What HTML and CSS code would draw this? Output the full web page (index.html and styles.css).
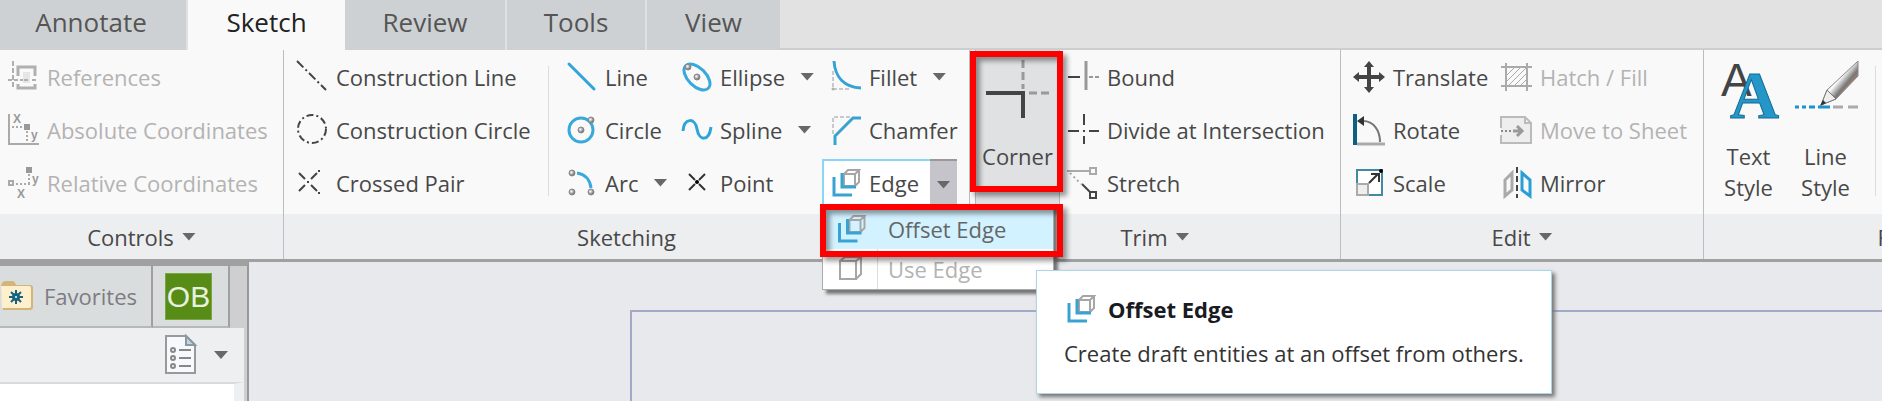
FILE: index.html
```html
<!DOCTYPE html>
<html lang="en">
<head>
    <meta charset="UTF-8">
    <meta name="viewport" content="width=device-width, initial-scale=1.0">
    <title>Sketch</title>
    <link rel="stylesheet" href="styles.css">
</head>
<body>
    <svg class="defs" aria-hidden="true">
        <symbol id="cube" viewBox="0 0 32 32">
            <path d="M6 8h16v18H6zM6 8l5-4h16l-5 4M27 4v17l-5 5" fill="none" stroke="#a6a6a6" stroke-width="2"/>
        </symbol>
        <symbol id="offset-edge" viewBox="0 0 32 32">
            <path d="M15 7h11v12H15zM15 7l4-4h11l-4 4M30 3v12l-4 4" fill="none" stroke="#a6a6a6" stroke-width="2"/>
            <path d="M13 6v14h14M5 10v18h18" fill="none" stroke="#38a3d3" stroke-width="3"/>
        </symbol>
        <radialGradient id="ball" cx="0.4" cy="0.4">
            <stop offset="0" stop-color="#fff"/>
            <stop offset="1" stop-color="#777"/>
        </radialGradient>
        <linearGradient id="pencil" x1="0" y1="0" x2="1" y2="1">
            <stop offset="0.3" stop-color="#999"/>
            <stop offset="0.45" stop-color="#fff"/>
            <stop offset="0.6" stop-color="#777"/>
            <stop offset="0.7" stop-color="#b98468"/>
        </linearGradient>
    </svg>

    <nav class="tabs">
        <button class="tab annotate">Annotate</button>
        <button class="tab sketch active">Sketch</button>
        <button class="tab review">Review</button>
        <button class="tab tools">Tools</button>
        <button class="tab view">View</button>
    </nav>

    <div class="ribbon">
        <section class="group controls">
            <div class="group-body">
                <div class="col">
                    <button class="cmd" disabled>
                        <svg class="icon" viewBox="0 0 32 32" fill="none" stroke="#b0b0b0" stroke-width="2">
                            <path d="M6 0v28" stroke-dasharray="5 2"/>
                            <path d="M1 19h30" stroke-dasharray="4 2"/>
                            <path d="M11 15V6h17v9M11 23v4h17v-4" stroke-width="3"/>
                            <path d="M16 11h7v11h-7z" fill="#e6e6e6" stroke="none"/>
                            <path d="M17 19h4"/>
                        </svg>
                        References
                    </button>
                    <button class="cmd" disabled>
                        <svg class="icon" viewBox="0 0 32 32" fill="none" stroke="#aaa" stroke-width="2">
                            <path d="M2 0v30h30"/>
                            <path d="M5 13h12M20 17v11" stroke-dasharray="2 2"/>
                            <path d="M17 10h6v6h-6z" fill="#999" stroke="none"/>
                            <text class="axis" x="6" y="9">X</text>
                            <text class="axis" x="24" y="25">y</text>
                        </svg>
                        Absolute Coordinates
                    </button>
                    <button class="cmd" disabled>
                        <svg class="icon" viewBox="0 0 32 32" fill="none" stroke="#aaa" stroke-width="2">
                            <path d="M2 14h4v4H2z"/>
                            <path d="M9 17h14M22 7v9" stroke-dasharray="2 2"/>
                            <path d="M19 0h6v6h-6z" fill="#999" stroke="none"/>
                            <text class="axis" x="10" y="31">X</text>
                            <text class="axis" x="25" y="16">y</text>
                        </svg>
                        Relative Coordinates
                    </button>
                </div>
            </div>
            <button class="group-label">Controls <span class="arrow"></span></button>
        </section>

        <section class="group sketching">
            <div class="group-body">
                <div class="col construction">
                    <button class="cmd">
                        <svg class="icon" viewBox="0 0 32 32" fill="none" stroke="#444" stroke-width="2">
                            <path d="M1 0l29 29" stroke-dasharray="9 3 2 3"/>
                        </svg>
                        Construction Line
                    </button>
                    <button class="cmd">
                        <svg class="icon" viewBox="0 0 32 32" fill="none" stroke="#444" stroke-width="2">
                            <circle cx="16" cy="15" r="14" stroke-dasharray="7 3 2 3"/>
                        </svg>
                        Construction Circle
                    </button>
                    <button class="cmd">
                        <svg class="icon" viewBox="0 0 32 32" fill="none" stroke="#444" stroke-width="2">
                            <path d="M3 6l6 6M15 18l6 6M3 24l6-6M15 12l6-6M11 15h2M23 3v2M23 25v2"/>
                        </svg>
                        Crossed Pair
                    </button>
                </div>
                <div class="col shapes">
                    <button class="cmd">
                        <svg class="icon" viewBox="0 0 32 32" fill="none" stroke="#2fa4d8" stroke-width="3">
                            <path d="M4 3l25 25" stroke-linecap="round"/>
                        </svg>
                        Line
                    </button>
                    <button class="cmd">
                        <svg class="icon" viewBox="0 0 32 32" fill="none" stroke="#38a9dc" stroke-width="3">
                            <circle cx="16" cy="16" r="12"/>
                            <g fill="url(#ball)" stroke="#888" stroke-width="1">
                                <circle cx="16" cy="16" r="3"/>
                                <circle cx="26" cy="6" r="3"/>
                            </g>
                        </svg>
                        Circle
                    </button>
                    <button class="cmd">
                        <svg class="icon" viewBox="0 0 32 32" fill="none" stroke="#38a9dc" stroke-width="3">
                            <path d="M12 6c8 1 13 7 14 15"/>
                            <g fill="url(#ball)" stroke="#888" stroke-width="1">
                                <circle cx="7" cy="6" r="3"/>
                                <circle cx="7" cy="25" r="3"/>
                                <circle cx="26" cy="25" r="3"/>
                            </g>
                        </svg>
                        Arc <span class="arrow"></span>
                    </button>
                </div>
                <div class="col curves">
                    <button class="cmd">
                        <svg class="icon" viewBox="0 0 32 32" fill="none" stroke="#38a9dc" stroke-width="3">
                            <ellipse cx="17" cy="16" rx="16" ry="9" transform="rotate(45 17 16)"/>
                            <g fill="url(#ball)" stroke="#888" stroke-width="1">
                                <circle cx="8" cy="6" r="3"/>
                                <circle cx="17" cy="16" r="3"/>
                            </g>
                        </svg>
                        Ellipse <span class="arrow"></span>
                    </button>
                    <button class="cmd">
                        <svg class="icon" viewBox="0 0 32 32" fill="none" stroke="#2fa4d8" stroke-width="3">
                            <path d="M3 17C4 4 15 3 17 15S29 28 31 13"/>
                        </svg>
                        Spline <span class="arrow"></span>
                    </button>
                    <button class="cmd">
                        <svg class="icon" viewBox="0 0 32 32" fill="none" stroke="#333" stroke-width="2">
                            <path d="M9 7l6 6M19 17l6 6M9 23l6-6M19 13l6-6"/>
                            <circle cx="17" cy="15" r="2" fill="#000" stroke="none"/>
                        </svg>
                        Point
                    </button>
                </div>
                <div class="col edges">
                    <button class="cmd">
                        <svg class="icon" viewBox="0 0 32 32" fill="none" stroke="#38a3d3" stroke-width="3">
                            <path d="M4 10v18h16" stroke="#999" stroke-width="1" stroke-dasharray="4 2"/>
                            <path d="M5 0c1 16 10 26 27 27"/>
                            <circle cx="4" cy="28" r="1" stroke="#999" stroke-width="1" fill="#fff"/>
                        </svg>
                        Fillet <span class="arrow"></span>
                    </button>
                    <button class="cmd">
                        <svg class="icon" viewBox="0 0 32 32" fill="none" stroke="#38a3d3" stroke-width="3">
                            <path d="M4 20V3h17" stroke="#999" stroke-width="1" stroke-dasharray="4 2"/>
                            <path d="M6 31v-9L24 4h8"/>
                        </svg>
                        Chamfer
                    </button>
                    <div class="split">
                        <button class="cmd"><svg class="icon"><use href="#offset-edge"/></svg>Edge</button>
                        <button class="split-toggle" aria-label="Edge options"><span class="arrow"></span></button>
                        <div class="menu">
                            <button class="menu-item selected"><svg class="icon" viewBox="0 0 32 32"><use href="#offset-edge"/></svg>Offset Edge</button>
                            <button class="menu-item" disabled><svg class="icon" viewBox="0 0 32 32"><use href="#cube"/></svg>Use Edge</button>
                            <div class="callout"></div>
                        </div>
                    </div>
                </div>
            </div>
            <div class="group-label">Sketching</div>
        </section>

        <section class="group trim">
            <div class="group-body">
                <button class="big corner">
                    <svg class="big-icon" viewBox="0 0 64 64" fill="none" stroke="#444" stroke-width="4">
                        <path d="M0 34h37v25"/>
                        <path d="M37 1v29M43 34h20" stroke="#999" stroke-width="3" stroke-dasharray="8 4"/>
                    </svg>
                    Corner
                    <span class="callout"></span>
                </button>
                <div class="col">
                    <button class="cmd">
                        <svg class="icon" viewBox="0 0 32 32" fill="none" stroke="#444" stroke-width="2">
                            <path d="M1 16h12"/>
                            <path d="M19 0v29" stroke="#999" stroke-width="3"/>
                            <path d="M22 16h10" stroke="#999" stroke-dasharray="4 2"/>
                        </svg>
                        Bound
                    </button>
                    <button class="cmd">
                        <svg class="icon" viewBox="0 0 32 32" fill="none" stroke="#444" stroke-width="2">
                            <path d="M1 17h11M22 17h10M17 0v11M17 22v8M16 17h2"/>
                        </svg>
                        Divide at Intersection
                    </button>
                    <button class="cmd">
                        <svg class="icon" viewBox="0 0 32 32" fill="none" stroke="#aaa" stroke-width="2">
                            <path d="M0 4h23M23 1h6v6h-6z"/>
                            <path d="M3 6l11 11" stroke-dasharray="2 3"/>
                            <path d="M15 17l8 8M23 25h6v6h-6z" stroke="#444"/>
                        </svg>
                        Stretch
                    </button>
                </div>
            </div>
            <button class="group-label">Trim <span class="arrow"></span></button>
        </section>

        <section class="group edit">
            <div class="group-body">
                <div class="col transform">
                    <button class="cmd">
                        <svg class="icon" viewBox="0 0 32 32" fill="#444">
                            <path d="M16 0l5 6h-3v8h8v-3l6 5-6 5v-3h-8v8h3l-5 6-5-6h3v-8H6v3l-6-5 6-5v3h8V6h-3z"/>
                        </svg>
                        Translate
                    </button>
                    <button class="cmd">
                        <svg class="icon" viewBox="0 0 32 32" fill="none">
                            <path d="M4 30h28" stroke="#aaa" stroke-width="3"/>
                            <path d="M2 0v31" stroke="#0f5f82" stroke-width="4"/>
                            <path d="M10 7c11 0 17 10 17 21" stroke="#777" stroke-width="2"/>
                            <path d="M4 7l7-5v10z" fill="#333"/>
                        </svg>
                        Rotate
                    </button>
                    <button class="cmd">
                        <svg class="icon" viewBox="0 0 32 32" fill="none" stroke-width="2">
                            <path d="M4 3h25v25H4z" fill="#fff" stroke="#4389a5"/>
                            <path d="M4 17h11v11H4z" fill="#eee" stroke="#aaa"/>
                            <path d="M16 16l9-9M18 7h8v8" stroke="#333"/>
                            <circle cx="28" cy="4" r="2" fill="#000"/>
                        </svg>
                        Scale
                    </button>
                </div>
                <div class="col">
                    <button class="cmd" disabled>
                        <svg class="icon" viewBox="0 0 32 32" fill="none" stroke="#aaa" stroke-width="2">
                            <path d="M6 2v28M27 2v28M1 6h31M1 25h31"/>
                            <path d="M7 14l7-7M7 20L20 7M9 24L26 7M15 24l11-11M21 24l5-5" stroke-width="1"/>
                        </svg>
                        Hatch / Fill
                    </button>
                    <button class="cmd" disabled>
                        <svg class="icon" viewBox="0 0 32 32" fill="none" stroke="#bbb" stroke-width="2">
                            <path d="M1 14V3h24l6 6v20H1v-8M25 3v6h6" fill="#eee"/>
                            <path d="M1 17h12" stroke="#888" stroke-dasharray="2 2"/>
                            <path d="M13 17h9M17 12l5 5-5 5" stroke="#999" stroke-width="3"/>
                        </svg>
                        Move to Sheet
                    </button>
                    <button class="cmd">
                        <svg class="icon" viewBox="0 0 32 32" fill="none" stroke-width="2">
                            <path d="M5 13l7-7v17l-7 6z" stroke="#aaa" stroke-width="3"/>
                            <path d="M17 0v31" stroke="#444" stroke-dasharray="6 3"/>
                            <path d="M22 6l8 7v16l-8-6z" stroke="#2a9fd6" stroke-width="3"/>
                        </svg>
                        Mirror
                    </button>
                </div>
            </div>
            <button class="group-label">Edit <span class="arrow"></span></button>
        </section>

        <section class="group format">
            <div class="group-body">
                <button class="big">
                    <svg class="big-icon" viewBox="0 0 64 64">
                        <text class="letter-back" x="4" y="37">A</text>
                        <text class="letter-front" x="13" y="59">A</text>
                    </svg>
                    <span>Text<br>Style</span>
                </button>
                <button class="big">
                    <svg class="big-icon" viewBox="0 0 64 64" fill="none">
                        <path d="M27 46l6-15L64 2v15L42 40z" fill="url(#pencil)" stroke="#888"/>
                        <path d="M27 46l6-15 9 9z" fill="#eee" stroke="#777"/>
                        <path d="M26 47l3-6 3 3z" fill="#333"/>
                        <path d="M1 48h4M8 48h4M15 48h6M24 48h12" stroke="#1b93cf" stroke-width="3"/>
                        <path d="M39 48h10M54 48h10" stroke="#aaa" stroke-width="3"/>
                    </svg>
                    <span>Line<br>Style</span>
                </button>
                <div class="separator"></div>
            </div>
            <button class="group-label">Format <span class="arrow"></span></button>
        </section>
    </div>

    <main class="workspace">
        <aside class="panel">
            <div class="panel-tabs">
                <button class="panel-tab favorites">
                    <svg class="folder" viewBox="0 0 34 30">
                        <path d="M1 5q1-5 5-5h6q3 0 4 4h14q3 0 3 3v19q0 3-3 3H3z" fill="#d5b577"/>
                        <path d="M1 5h28q2 0 2 2v18q0 2-2 2H2z" fill="#fff0cd"/>
                        <path d="M16 9v14M9 16h14M11 11l10 10M21 11L11 21" stroke="#19637f" stroke-width="2"/>
                        <circle cx="16" cy="16" r="4" fill="#19637f"/>
                        <circle cx="16" cy="16" r="1" fill="#fff"/>
                    </svg>
                    Favorites
                </button>
                <button class="panel-tab user"><span class="badge">OB</span></button>
            </div>
            <div class="panel-bar">
                <button class="list-button" aria-label="Settings">
                    <svg class="sheet" viewBox="0 0 32 40" fill="none" stroke="#888" stroke-width="2">
                        <path d="M1 1h20l9 9v28H1z" fill="#f6fafc" stroke="#999"/>
                        <path d="M21 1v9h9z" fill="#c5d6de" stroke="#8a9aa2"/>
                        <path d="M14 15h12M14 23h12M14 31h12"/>
                        <circle cx="8" cy="15" r="2"/>
                        <circle cx="8" cy="23" r="2"/>
                        <circle cx="8" cy="31" r="2"/>
                    </svg>
                    <span class="arrow"></span>
                </button>
            </div>
            <div class="panel-list"></div>
        </aside>
        <div class="canvas">
            <div class="sheet-frame"></div>
        </div>
        <div class="tooltip" role="tooltip">
            <h2><svg class="icon"><use href="#offset-edge"/></svg>Offset Edge</h2>
            <p>Create draft entities at an offset from others.</p>
        </div>
    </main>
</body>
</html>
```
FILE: styles.css
```css
* {
    box-sizing: border-box;
}

body {
    display: flex;
    flex-direction: column;
    height: 100vh;
    margin: 0;
    overflow: hidden;
    font-family: "Open Sans", sans-serif;
    font-size: 22px;
    line-height: 30px;
    color: #484848;
    background: #e8e9ed;
}

button {
    margin: 0;
    padding: 0;
    border: none;
    background: none;
    color: inherit;
    font: inherit;
    white-space: nowrap;
}

svg {
    overflow: visible;
}

.defs {
    position: absolute;
    width: 0;
    height: 0;
}

/* Tabs */
.tabs {
    display: flex;
    flex: none;
    height: 50px;
    background: #e2e2e2;
    border-bottom: 2px solid #cbcfd0;
}

.tab {
    height: 50px;
    padding-bottom: 6px;
    background: #cdd1d4;
    border-right: 2px solid #dfe2e3;
    font-size: 26px;
    color: #555;
}

.tab.active {
    background: #f9f9f9;
    border: none;
    color: #222;
}

.annotate {
    width: 188px;
    padding-right: 4px;
}

.sketch {
    width: 157px;
}

.review {
    width: 162px;
}

.tools {
    width: 140px;
}

.view {
    width: 133px;
    border: none;
}

/* Ribbon */
.ribbon {
    display: flex;
    flex: none;
    overflow-x: clip;
    background: #f9f9f9;
    border-bottom: 3px solid #a0a0a0;
}

.group {
    display: flex;
    flex: none;
    flex-direction: column;
    border-right: 1px solid #bbbec0;
}

.group-body {
    display: flex;
    height: 164px;
    padding-left: 12px;
}

.controls {
    width: 284px;
}

.controls .group-body {
    padding-left: 7px;
}

.sketching {
    width: 686px;
}

.trim {
    width: 371px;
}

.trim .group-body {
    padding-left: 5px;
}

.edit {
    width: 363px;
}

.format {
    width: 444px;
}

.format .group-body {
    padding-left: 6px;
}

.group-label {
    display: flex;
    align-items: center;
    justify-content: center;
    gap: 8px;
    width: 100%;
    height: 45px;
    background: #edeef0;
}

.arrow {
    flex: none;
    width: 14px;
    height: 8px;
    background: #686868;
    clip-path: polygon(0 0, 100% 0, 50% 100%);
}

.col {
    display: flex;
    flex-direction: column;
}

.construction {
    width: 252px;
}

.shapes {
    position: relative;
    width: 132px;
    padding-left: 17px;
}

.shapes::before,
.separator {
    content: "";
    width: 1px;
    height: 130px;
    background: #dcdcdc;
}

.shapes::before {
    position: absolute;
    left: 0;
    top: 16px;
}

.separator {
    margin: 16px 0 0 11px;
}

.curves {
    width: 149px;
}

.transform {
    width: 147px;
}

.cmd {
    display: flex;
    align-items: center;
    height: 53px;
}

.cmd:disabled,
.menu-item:disabled {
    color: #b3b3b3;
}

.cmd .arrow {
    margin-left: 15px;
}

.icon {
    flex: none;
    width: 32px;
    height: 32px;
    margin-right: 8px;
}

.axis {
    fill: #999;
    stroke: none;
    font: bold 12px "Liberation Sans", sans-serif;
}

.big {
    display: flex;
    flex-direction: column;
    align-items: center;
    width: 77px;
    height: 164px;
    padding-top: 9px;
    line-height: 31px;
    text-align: center;
}

.big-icon {
    flex: none;
    width: 64px;
    height: 64px;
    margin-bottom: 18px;
}

.letter-back {
    fill: #444;
    font: 46px "Liberation Sans", sans-serif;
}

.letter-front {
    fill: #2496c8;
    stroke: #146c96;
    font: bold 68px "Liberation Serif", serif;
}

.corner {
    position: relative;
    width: 85px;
    margin-right: 7px;
    background: #e0e1e3;
    border: 1px solid #b8b8b8;
    border-top: none;
}

/* Edge split button and its menu */
.split {
    position: relative;
    display: flex;
    width: 135px;
    height: 49px;
    margin: 3px 0 0 -7px;
    background: #fff;
    border-top: 2px solid #8cd5f8;
    border-left: 2px solid #8cd5f8;
}

.split .cmd {
    width: 106px;
    height: 44px;
    padding-left: 5px;
}

.split-toggle {
    display: flex;
    align-items: center;
    justify-content: center;
    width: 27px;
    margin-top: -2px;
    background: #c5c4ca;
    border-top: 2px solid #999;
}

.menu {
    position: absolute;
    z-index: 2;
    top: 43px;
    left: -2px;
    width: 232px;
    padding-top: 4px;
    background: #fff;
    border: 1px solid #aaa;
    box-shadow: 4px 4px 3px #777;
}

.menu-item {
    display: flex;
    align-items: center;
    width: 100%;
    height: 40px;
}

.menu-item .icon {
    width: 55px;
    height: 32px;
    padding: 0 11px;
    margin-right: 10px;
}

.menu-item:disabled .icon {
    height: 40px;
    border-right: 1px solid #ddd;
}

.selected {
    background: #d2f2ff;
    color: #666;
}

/* Red highlight boxes */
.callout {
    position: absolute;
    z-index: 3;
    border: 6px solid #f00;
    box-shadow: 4px 4px 5px rgba(0, 0, 0, 0.4), inset 4px 4px 5px rgba(0, 0, 0, 0.4);
    pointer-events: none;
}

.corner .callout {
    inset: 1px -4px 21px -6px;
}

.menu .callout {
    inset: -1px -10px 32px -3px;
}

/* Workspace */
.workspace {
    position: relative;
    display: flex;
    flex: 1;
    min-height: 0;
}

.panel {
    display: flex;
    flex: none;
    flex-direction: column;
    width: 249px;
    background: #cfcfd1;
    border-right: 2px solid #999;
    border-top: 4px solid #a0a0a0;
}

.panel-tabs {
    display: flex;
    height: 62px;
}

.panel-tab {
    display: flex;
    align-items: center;
    height: 62px;
    background: #dadddd;
    border-right: 2px solid #a0a0a0;
    border-bottom: 2px solid #b8b8b8;
    color: #7c7c84;
}

.favorites {
    width: 153px;
}

.user {
    width: 77px;
    padding-left: 12px;
}

.folder {
    width: 34px;
    height: 30px;
    margin-right: 10px;
}

.badge {
    width: 47px;
    height: 47px;
    background: #578d16;
    border: 1px solid #79a545;
    color: #e8f0df;
    font-family: "Liberation Sans", sans-serif;
    font-size: 30px;
    line-height: 45px;
    text-align: center;
}

.panel-bar {
    display: flex;
    justify-content: flex-end;
    width: 244px;
    height: 54px;
    background: #eeeff1;
}

.list-button {
    display: flex;
    align-items: center;
    gap: 17px;
    padding-right: 16px;
}

.sheet {
    width: 32px;
    height: 40px;
}

.panel-list {
    flex: 1;
    width: 244px;
    background: #fff;
    border-top: 2px solid #d8dadc;
    border-right: 10px solid #eeeff1;
}

.canvas {
    flex: 1;
    padding: 48px 0 0 381px;
}

.sheet-frame {
    height: 100%;
    border-top: 2px solid #a3aac8;
    border-left: 2px solid #a3aac8;
}

.tooltip {
    position: absolute;
    z-index: 4;
    top: 8px;
    left: 1036px;
    padding: 22px 27px 25px;
    background: #fff;
    border: 1px solid #aed6ea;
    box-shadow: 3px 3px 4px #777;
    color: #333;
}

.tooltip h2 {
    display: flex;
    align-items: center;
    margin: 0 0 13px;
    font-size: 22px;
    line-height: 32px;
    color: #1a1a22;
}

.tooltip .icon {
    margin-right: 12px;
}

.tooltip p {
    margin: 0;
}
```
